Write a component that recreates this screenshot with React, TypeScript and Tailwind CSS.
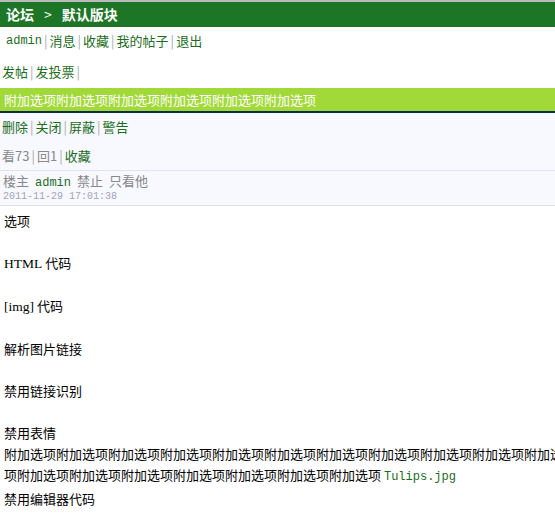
const cjk = { fontFamily: '"Noto Sans CJK SC", sans-serif' };

function Sep() {
    return <span className="mx-[2px] text-[#a8a8a8]">|</span>;
}

function Mono({ children }: { children: React.ReactNode }) {
    return <span className="font-['Liberation_Mono',monospace] text-[12px]">{children}</span>;
}

export default function App() {
    const longText = "附加选项".repeat(18);

    return (
        <div className="w-full overflow-hidden bg-white text-[13px]" style={cjk}>
            {/* top bar */}
            <div className="h-[27px] border-t-2 border-[#b9b9b9] bg-[#1c7625] flex items-center pl-[6px] text-white font-bold text-[14px]">
                <span>论坛</span>
                <span className="mx-[10px] font-normal">&gt;</span>
                <span>默认版块</span>
            </div>

            {/* user links */}
            <div className="h-[28px] flex items-center pl-[6px] text-[#1c6e1c]">
                <Mono>admin</Mono>
                <Sep />
                <span>消息</span>
                <Sep />
                <span>收藏</span>
                <Sep />
                <span>我的帖子</span>
                <Sep />
                <span>退出</span>
            </div>

            <div className="h-[33px] flex items-center pl-[2px] text-[#1c6e1c]">
                <span>发帖</span>
                <Sep />
                <span>发投票</span>
                <Sep />
            </div>

            {/* title bar */}
            <div className="h-[25px] bg-[#a1d939] border-b-2 border-[#0c2d4a] flex items-center pl-[4px] text-white whitespace-nowrap">
                附加选项附加选项附加选项附加选项附加选项附加选项
            </div>

            <div className="bg-[#f8f8ff]">
                <div className="h-[28px] flex items-center pl-[2px] text-[#1c6e1c]">
                    <span>删除</span>
                    <Sep />
                    <span>关闭</span>
                    <Sep />
                    <span>屏蔽</span>
                    <Sep />
                    <span>警告</span>
                </div>
                <div className="h-[30px] flex items-center pl-[2px] text-[#888] border-b border-[#e1e1f7]">
                    <span>看73</span>
                    <Sep />
                    <span>回1</span>
                    <Sep />
                    <span className="text-[#1c6e1c]">收藏</span>
                </div>
                <div className="h-[35px] pl-[3px] pt-[2px] border-b border-[#e1e1f7]">
                    <div className="h-[16px] flex items-center gap-[6px] text-[#888]">
                        <span>楼主</span>
                        <span className="text-[#1c6e1c]"><Mono>admin</Mono></span>
                        <span>禁止</span>
                        <span>只看他</span>
                    </div>
                    <div className="h-[14px] flex items-center font-['Liberation_Mono',monospace] text-[10px] text-[#a4a4b8]">
                        2011-11-29 17:01:38
                    </div>
                </div>
            </div>

            {/* post body */}
            <div className="w-[570px] pl-[4px] pt-[4px] leading-[21px] text-black">
                <div>选项</div>
                <br />
                <div>
                    <span className="font-['Liberation_Serif',serif] text-[13.5px]">HTML</span> 代码
                </div>
                <br />
                <div>
                    <span className="font-['Liberation_Serif',serif] text-[13.5px]">[img]</span> 代码
                </div>
                <br />
                <div>解析图片链接</div>
                <br />
                <div>禁用链接识别</div>
                <br />
                <div>禁用表情</div>
                <div className="break-all">
                    {longText}{" "}
                    <span className="text-[#1c6e1c] font-['Liberation_Mono',monospace] text-[12px]">Tulips.jpg</span>
                </div>
                <div>禁用编辑器代码</div>
            </div>
        </div>
    );
}
